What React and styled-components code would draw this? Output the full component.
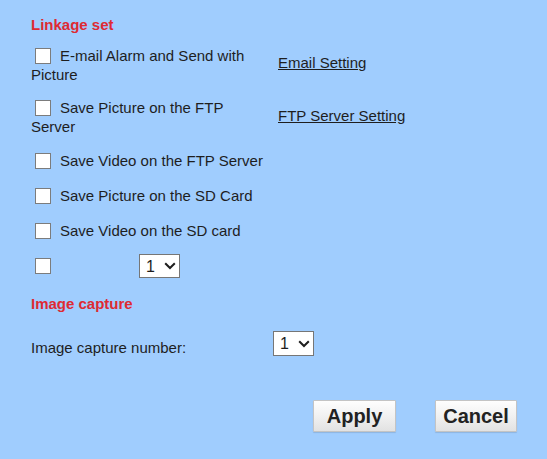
import React from "react";
import styled, { createGlobalStyle } from "styled-components";

const Global = createGlobalStyle`
  html, body { margin: 0; padding: 0; background: #a0cdfe; }
  body { font-family: "Liberation Sans", Arial, sans-serif; color: #1e1e1e; }
`;

const Page = styled.div`
  width: 547px;
  height: 459px;
  box-sizing: border-box;
  padding: 15px 30px 0 31px;
  background: #a0cdfe;
  font-size: 15px;
  line-height: 19px;
`;

const Heading = styled.h2`
  margin: ${(p) => p.$mt || 0}px 0 0;
  font-size: 15px;
  line-height: 19px;
  font-weight: bold;
  color: #de2a33;
`;

const Table = styled.div`
  display: grid;
  grid-template-columns: ${(p) => p.$cols};
  margin-top: ${(p) => p.$mt || 0}px;
`;

const Label = styled.div`
  grid-column: ${(p) => (p.$span ? "1 / -1" : "auto")};
  padding: ${(p) => p.$pad || "8px 0 8px"};
  padding-right: ${(p) => p.$pr || 0}px;
  display: ${(p) => (p.$flex ? "flex" : "block")};
  align-items: center;
`;

const LinkCell = styled.div`
  display: flex;
  align-items: center;
  padding: ${(p) => p.$pad || "8px 0 8px"};
  padding-bottom: 11px;
`;

const Link = styled.a`
  color: #1e1e1e;
  text-decoration: underline;
  cursor: pointer;
`;

const Check = styled.input.attrs({ type: "checkbox" })`
  appearance: none;
  -webkit-appearance: none;
  box-sizing: border-box;
  width: 16px;
  height: 16px;
  margin: 0 9px 0 4px;
  border: 1px solid #7c7c7c;
  background: #fff;
  vertical-align: -3px;
  flex: none;
`;

const SelectWrap = styled.span`
  position: relative;
  display: inline-block;
  margin-left: ${(p) => p.$ml || 0}px;
`;

const Select = styled.select`
  appearance: none;
  -webkit-appearance: none;
  box-sizing: border-box;
  width: 41px;
  height: ${(p) => p.$h || 24}px;
  margin: 0;
  padding: 0 0 0 6px;
  border: 1px solid #767676;
  border-radius: 0;
  background: #fff;
  color: #1e1e1e;
  font-family: "Liberation Sans", Arial, sans-serif;
  font-size: 16px;
  display: block;
`;

const Chevron = styled.svg`
  position: absolute;
  right: 4px;
  top: 50%;
  margin-top: -4px;
  pointer-events: none;
`;

const CaptureLabel = styled.div`
  padding: 15px 0 7px;
`;

const CaptureCell = styled.div`
  padding: 8px 0 7px;
`;

const Buttons = styled.div`
  display: flex;
  justify-content: flex-end;
  gap: 39px;
  margin-top: 36px;
`;

const Button = styled.button`
  box-sizing: border-box;
  width: ${(p) => p.$w}px;
  height: 32px;
  padding: 0;
  border: 1px solid #c4c4c4;
  border-radius: 1px;
  background: linear-gradient(#fefefe, #f1f1f1 50%, #e2e2e2);
  box-shadow: 0 1px 1px rgba(0, 0, 0, 0.12);
  color: #222;
  font-family: "Liberation Sans", Arial, sans-serif;
  font-size: 20px;
  font-weight: bold;
  cursor: pointer;
`;

const Dropdown = ({ ml, h }) => (
  <SelectWrap $ml={ml}>
    <Select $h={h} defaultValue="1">
      <option value="1">1</option>
      <option value="2">2</option>
      <option value="3">3</option>
    </Select>
    <Chevron width="12" height="8" viewBox="0 0 12 8">
      <path d="M1.2 1.2 L6 6 L10.8 1.2" fill="none" stroke="#1e1e1e" strokeWidth="2" />
    </Chevron>
  </SelectWrap>
);

export default function App() {
  return (
    <>
      <Global />
      <Page>
        <Heading>Linkage set</Heading>
        <Table $cols="247px 1fr" $mt={4}>
          <Label $pr={22} $pad="8px 0 6px">
            <Check />E-mail Alarm and Send with Picture
          </Label>
          <LinkCell $pad="8px 0 6px">
            <Link>Email Setting</Link>
          </LinkCell>
          <Label $pr={22} $pad="8px 0 7px">
            <Check />Save Picture on the FTP Server
          </Label>
          <LinkCell $pad="8px 0 7px">
            <Link>FTP Server Setting</Link>
          </LinkCell>
          <Label $span>
            <Check />Save Video on the FTP Server
          </Label>
          <Label $span>
            <Check />Save Picture on the SD Card
          </Label>
          <Label $span>
            <Check />Save Video on the SD card
          </Label>
          <Label $span $flex $pad="6px 0 8px">
            <Check />
            <Dropdown ml={79} />
          </Label>
        </Table>
        <Heading $mt={8}>Image capture</Heading>
        <Table $cols="242px 1fr" $mt={10}>
          <CaptureLabel>Image capture number:</CaptureLabel>
          <CaptureCell>
            <Dropdown h={25} />
          </CaptureCell>
        </Table>
        <Buttons>
          <Button $w={83}>Apply</Button>
          <Button $w={82}>Cancel</Button>
        </Buttons>
      </Page>
    </>
  );
}
